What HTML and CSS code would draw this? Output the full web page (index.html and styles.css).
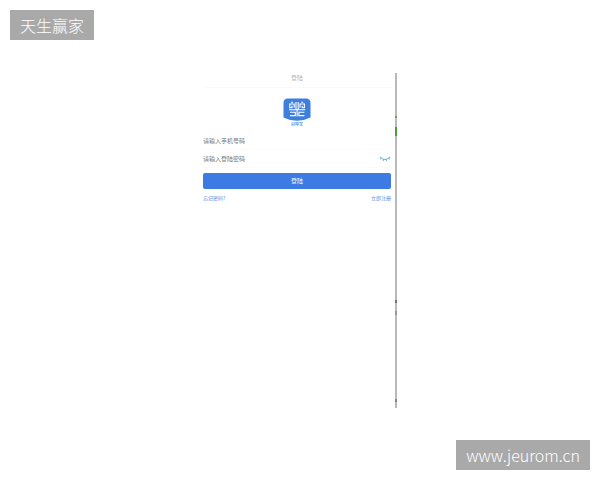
FILE: index.html
```
<!DOCTYPE html>
<html lang="zh-CN">
<head>
  <meta charset="UTF-8">
  <meta name="viewport" content="width=device-width, initial-scale=1">
  <title>登陆</title>
  <link rel="stylesheet" href="styles.css">
</head>
<body>
  <div class="tag tag-title">天生赢家</div>

  <div class="phone">
    <main class="screen">
      <h1 class="screen-title">登陆</h1>

      <div class="brand">
        <svg class="brand-logo" viewBox="0 0 28 24" aria-hidden="true">
          <path fill="#3d7fdc" d="M5 0.5H23Q27.5 0.5 27.5 5V19.5Q21 22.8 14 22.8T0.5 19.5V5Q0.5 0.5 5 0.5Z"/>
          <g fill="none" stroke="#fff" stroke-width="1.1">
            <path d="M13 4V11.5M15.2 4V11.5M6 11.7H22.2"/>
            <path d="M11.2 9.8V6H6.8V9.8H9V7.8M17 9.8V6H21.4V9.8H19.2V7.8"/>
            <path d="M8 4.3H10M18.2 4.3H20.2"/>
            <path d="M7 14.2H12.3V17.6H7M21.4 14.2H15.9V17.6H21.4M14.1 11.7V18.6"/>
          </g>
        </svg>
        <span class="brand-name">尚呼宝</span>
      </div>

      <form class="login">
        <div class="field">
          <input type="tel" aria-label="手机号码" placeholder="请输入手机号码">
        </div>
        <div class="field">
          <input type="password" aria-label="登陆密码" placeholder="请输入登陆密码">
          <button class="eye" type="button" aria-label="显示密码">
            <svg viewBox="0 0 12 6" aria-hidden="true">
              <path d="M1 1Q6 6 11 1M2.3 2.2L1 3.4M4.7 3.4L4.3 4.9M7.3 3.4L7.7 4.9M9.7 2.2L11 3.4" fill="none" stroke="#4aa9bd" stroke-width="0.9"/>
            </svg>
          </button>
        </div>
        <button class="submit" type="submit">登陆</button>
        <div class="links">
          <a href="#">忘记密码?</a>
          <a href="#">立即注册</a>
        </div>
      </form>
    </main>
    <div class="edge"></div>
  </div>

  <div class="tag tag-site">www.jeurom.cn</div>
</body>
</html>
```

FILE: styles.css
```
* {
  box-sizing: border-box;
}

body {
  display: flex;
  flex-direction: column;
  justify-content: space-between;
  min-height: 100vh;
  margin: 0;
  padding: 10px;
  background: #fff;
  font-family: "Noto Sans CJK SC", sans-serif;
}

.tag {
  padding: 0 10px;
  background: #a9a9a9;
  color: #fff;
  font-size: 16px;
  font-weight: 300;
  line-height: 30px;
}

.tag-title {
  align-self: flex-start;
}

.tag-site {
  align-self: flex-end;
}

.phone {
  display: flex;
  gap: 4px;
  align-self: center;
  width: 100%;
  max-width: 194px;
  min-height: 70vh;
  padding-top: 1px;
}

.screen {
  flex: 1;
  font-size: 6px;
  line-height: 10px;
}

.screen-title {
  margin: 0;
  padding-bottom: 4px;
  border-bottom: 1px solid #fafafa;
  color: #b4b4b4;
  font-size: 6px;
  font-weight: 400;
  text-align: center;
}

.brand {
  display: flex;
  flex-direction: column;
  align-items: center;
  padding: 10px 0 6px;
}

.brand-logo {
  width: 28px;
  height: 24px;
}

.brand-name {
  color: #3d7fdc;
  font-size: 4px;
  font-weight: 500;
  line-height: 4px;
}

.field {
  display: flex;
  align-items: center;
  height: 18px;
  border-bottom: 1px solid #fcfcfc;
}

.field input {
  flex: 1;
  min-width: 0;
  padding: 0;
  border: 0;
  outline: 0;
  background: none;
  color: #333;
  font: inherit;
}

.field input::placeholder {
  color: #777;
}

.eye {
  display: flex;
  padding: 0;
  border: 0;
  background: none;
  cursor: pointer;
}

.eye svg {
  width: 12px;
  height: 6px;
}

.submit {
  display: block;
  width: 100%;
  height: 16px;
  margin: 5px 0 4px;
  padding: 0;
  border: 0;
  border-radius: 2px;
  background: #3c7be4;
  color: #fff;
  font: inherit;
  cursor: pointer;
}

.links {
  display: flex;
  justify-content: space-between;
  font-size: 5px;
}

.links a {
  color: #5b8ee0;
  text-decoration: none;
}

/* right side of the phone frame, with the green and dark marks on it */
.edge {
  width: 2px;
  background: linear-gradient(
    #b9b9b9 43px, #6aa25a 43px, #6aa25a 45px,
    #b9b9b9 45px, #b9b9b9 54px,
    #4f9a3c 54px, #4f9a3c 63px,
    #b9b9b9 63px, #b9b9b9 227px,
    #777 227px, #777 230px,
    #b9b9b9 230px, #b9b9b9 238px,
    #999 238px, #999 242px,
    #b9b9b9 242px, #b9b9b9 326px,
    #888 326px, #888 329px,
    #b9b9b9 329px
  );
}
```
